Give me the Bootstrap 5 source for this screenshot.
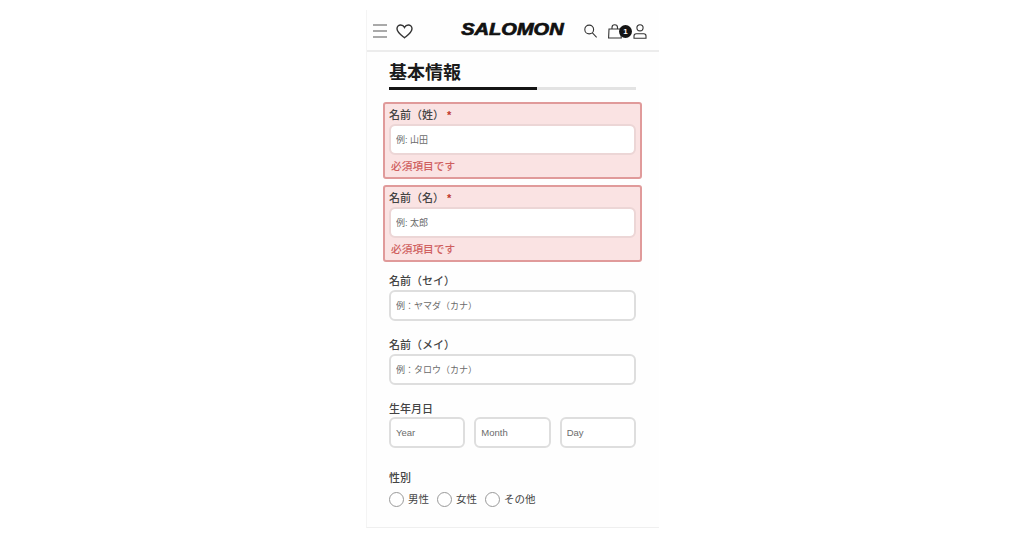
<!DOCTYPE html>
<html lang="ja">

<head>
    <meta charset="UTF-8">
    <meta name="viewport" content="width=device-width, initial-scale=1.0">
    <title>基本情報</title>
    <link href="https://cdn.jsdelivr.net/npm/bootstrap@5.3.3/dist/css/bootstrap.min.css" rel="stylesheet">
    <style>
        html, body {
            height: 536px;
            overflow: hidden;
            background: #fff;
        }

        body {
            font-family: "Liberation Sans", "Noto Sans CJK JP", sans-serif;
            color: #333;
        }

        .phone-frame {
            width: 293px;
            height: 518px;
            margin: 10px auto 0 366px;
            background: #fefefe;
            border-left: 1px solid #f4f4f4;
            border-bottom: 1px solid #efefef;
        }

        .top-bar {
            height: 42px;
            padding: 2px 12px 0 6px;
            border-bottom: 2px solid #ececec;
        }

        .top-bar svg {
            display: block;
            fill: none;
            stroke: #333;
        }

        .top-bar .menu-icon {
            stroke: #555;
        }

        .brand-text {
            font-family: "Liberation Sans", sans-serif;
            font-size: 17px;
            line-height: 20px;
            font-weight: 700;
            font-style: italic;
            color: #111;
            -webkit-text-stroke: .7px #111;
            transform: scaleX(1.18);
            margin: 0 0 3px 27px;
        }

        .bag-wrap {
            margin: 0 11px;
        }

        .cart-count {
            top: 1px;
            right: -10px;
            width: 13px;
            height: 13px;
            background: #151515;
            color: #fff;
            font: 700 8px/13px "Liberation Sans", sans-serif;
            text-align: center;
            border-radius: 50%;
        }

        .form-area {
            padding: 9px 23px 0 22px;
        }

        .section-title {
            font-size: 18px;
            line-height: 24px;
            font-weight: 700;
            color: #1a1a1a;
            margin: 0 0 2px;
        }

        .step-bar {
            height: 3px;
            background: #e3e3e3;
            margin-bottom: 12px;
        }

        .step-bar .progress-bar {
            background: #141414;
        }

        .field-block.has-error {
            margin: 0 -6px 6px;
            padding: 3px 4px 0;
            height: 77px;
            background: #fae3e3;
            border: 2px solid #e09a9a;
            border-radius: 3px;
        }

        .field-plain {
            margin-bottom: 16px;
        }

        .has-error + .field-plain {
            margin-top: 11px;
        }

        .field-label {
            display: block;
            font-size: 11px;
            line-height: 14px;
            font-weight: 500;
            color: #444;
            padding-top: 1px;
            margin: 0 0 2px;
        }

        .req-mark {
            color: #c0392b;
            font-weight: 700;
            margin-left: 3px;
        }

        .text-field.form-control {
            height: 31px;
            padding: 0 5px;
            font-size: 9px;
            color: #555;
            border: 2px solid #dedede;
            border-radius: 6px;
            box-shadow: none;
        }

        .text-field.form-control::placeholder {
            color: #6b6b6b;
        }

        .has-error .text-field.form-control {
            border-color: #ecd6d6;
        }

        .error-text {
            font-size: 10.7px;
            line-height: 14px;
            font-weight: 500;
            color: #cf5f5f;
            margin: 4px 0 0 2px;
        }

        .date-row {
            gap: 9px;
            margin-top: -1px;
        }

        .date-row .text-field.form-control {
            font-size: 9.5px;
        }

        .date-block {
            margin-bottom: 22px;
        }

        .gender-row {
            gap: 8px;
            margin-top: 7px;
        }

        .gender-row .form-check-input {
            width: 15px;
            height: 15px;
            margin: 0 4px 0 0;
            float: none;
            background-color: #fff;
            border: 1.5px solid #999;
        }

        .gender-row label {
            font-size: 10.5px;
            line-height: 15px;
            color: #444;
        }
    </style>
</head>

<body>
    <div class="phone-frame">
        <div class="top-bar d-flex align-items-center justify-content-between">
            <div class="d-flex align-items-center gap-2">
                <svg class="menu-icon" width="15" height="14" viewBox="0 0 15 14" stroke-width="1">
                    <path d="M0 1h14M0 7h14M0 13h14" />
                </svg>
                <svg width="17" height="15" viewBox="0 0 17 15" stroke-width="1.4">
                    <path d="M8.5 13.8C5 11 1 8.4 1 4.8 1 2.6 2.7 1 4.7 1c1.6 0 3 .9 3.8 2.4C9.3 1.900 10.700 1 12.300 1 14.300 1 16 2.600 16 4.800c0 3.600-4 6.200-7.500 9z" />
                </svg>
            </div>
            <div class="brand-text">SALOMON</div>
            <div class="d-flex align-items-center">
                <svg width="13" height="14" viewBox="0 0 13 14" stroke-width="1.1">
                    <circle cx="5.2" cy="5.5" r="4.4" />
                    <path d="M8.4 8.900l4.300 4.500" />
                </svg>
                <div class="position-relative bag-wrap">
                    <svg width="14" height="15" viewBox="0 0 14 15" stroke-width="1.1">
                        <path d="M1 5h11.500l.8 9H.6zM4 5V3.500C4 1.800 5.100.8 6.700.8S9.500 1.800 9.500 3.500V5" />
                    </svg>
                    <span class="cart-count position-absolute">1</span>
                </div>
                <svg width="14" height="15" viewBox="0 0 14 15" stroke-width="1.1">
                    <circle cx="7" cy="3.800" r="3.100" />
                    <path d="M1 14.200v-2.300c0-1.300 1-2.200 2.200-2.200h7.600c1.200 0 2.200.9 2.200 2.200v2.300z" />
                </svg>
            </div>
        </div>

        <form class="form-area">
            <h2 class="section-title">基本情報</h2>
            <div class="progress step-bar rounded-0">
                <div class="progress-bar" style="width: 60%"></div>
            </div>

            <div class="field-block has-error">
                <label class="field-label">名前（姓）<span class="req-mark">*</span></label>
                <input type="text" class="form-control text-field" placeholder="例: 山田">
                <div class="error-text">必須項目です</div>
            </div>
            <div class="field-block has-error">
                <label class="field-label">名前（名）<span class="req-mark">*</span></label>
                <input type="text" class="form-control text-field" placeholder="例: 太郎">
                <div class="error-text">必須項目です</div>
            </div>

            <div class="field-plain">
                <label class="field-label">名前（セイ）</label>
                <input type="text" class="form-control text-field" placeholder="例：ヤマダ（カナ）">
            </div>
            <div class="field-plain">
                <label class="field-label">名前（メイ）</label>
                <input type="text" class="form-control text-field" placeholder="例：タロウ（カナ）">
            </div>
            <div class="date-block">
                <label class="field-label">生年月日</label>
                <div class="d-flex date-row">
                    <input type="text" class="form-control text-field" placeholder="Year">
                    <input type="text" class="form-control text-field" placeholder="Month">
                    <input type="text" class="form-control text-field" placeholder="Day">
                </div>
            </div>
            <div>
                <label class="field-label">性別</label>
                <div class="d-flex align-items-center gender-row">
                    <div class="d-flex align-items-center">
                        <input class="form-check-input" type="radio" name="gender" id="gMale">
                        <label for="gMale">男性</label>
                    </div>
                    <div class="d-flex align-items-center">
                        <input class="form-check-input" type="radio" name="gender" id="gFemale">
                        <label for="gFemale">女性</label>
                    </div>
                    <div class="d-flex align-items-center">
                        <input class="form-check-input" type="radio" name="gender" id="gOther">
                        <label for="gOther">その他</label>
                    </div>
                </div>
            </div>
        </form>
    </div>

    <script src="https://cdn.jsdelivr.net/npm/bootstrap@5.3.3/dist/js/bootstrap.bundle.min.js"></script>
</body>

</html>
